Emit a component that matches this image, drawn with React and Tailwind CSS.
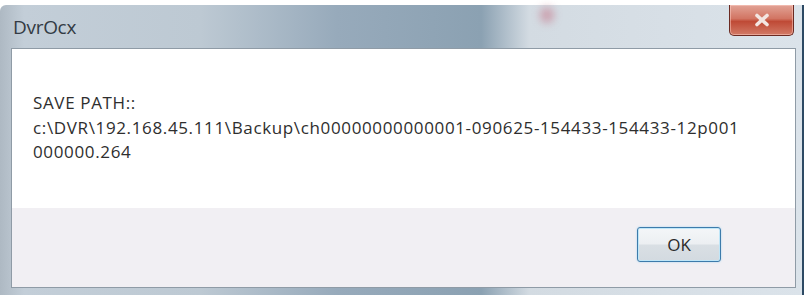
import React from 'react';

const font = { fontFamily: '"Open Sans", "Noto Sans", sans-serif' };

const CloseButton = () => (
  <div className="absolute right-[8px] top-0 w-[65px] h-[31px] rounded-b-[5px] border border-[#6b2a22] border-t-0 bg-[linear-gradient(180deg,#e2a396_0%,#d27563_45%,#bf4a36_55%,#d27a66_100%)] flex items-center justify-center shadow-[inset_0_0_0_1px_rgba(255,210,200,0.5)]">
    <svg width="18" height="14" viewBox="0 0 18 14">
      <path d="M4 2.5 L14 11.5 M14 2.5 L4 11.5" stroke="#f3e6e2" strokeWidth="3.6" strokeLinecap="round" />
    </svg>
  </div>
);

const App = () => {
  const lines = [
    'SAVE PATH::',
    'c:\\DVR\\192.168.45.111\\Backup\\ch00000000000001-090625-154433-154433-12p001',
    '000000.264',
  ];

  return (
    <div className="w-[809px] h-[295px] bg-white overflow-hidden" style={font}>
      <div className="h-[5px] bg-white" />
      {/* window frame */}
      <div className="relative w-[804px] h-[290px] rounded-tl-[6px] border-r-[2px] border-[#2d4a64] bg-[linear-gradient(90deg,#aeb9c3_0%,#c3ced8_3%,#bdc9d3_25%,#97aabb_42%,#8ba1b2_60%,#d3dbe2_66%,#dbe3ea_100%)] flex flex-col">
        <div className="h-[43px] flex items-center pl-[13px] pt-[1px] shrink-0">
          <span className="text-[19px] text-[#333b44] tracking-[-0.3px]">DvrOcx</span>
        </div>
        <div className="absolute left-[540px] top-[2px] w-[14px] h-[16px] rounded-full bg-[#c8899a] blur-[4px] opacity-70" />
        <CloseButton />
        {/* client area */}
        <div className="ml-[11px] mr-[6px] h-[240px] border border-[#8f9ba6] flex flex-col">
          <div className="h-[159px] bg-white pl-[21px] pt-[42px] text-[17px] leading-[24.5px] text-[#2e2e2e] tracking-[0.64px]">
            {lines.map((l, i) => (
              <div key={i} className="whitespace-nowrap">{l}</div>
            ))}
          </div>
          <div className="flex-1 bg-[#f1eff3] flex justify-end items-start pt-[19px] pr-[74px]">
            <button className="w-[84px] h-[35px] rounded-[3px] border border-[#3d7bab] bg-[linear-gradient(180deg,#f4f6f8_0%,#eceff2_48%,#d9dfe4_52%,#d3dae0_100%)] shadow-[inset_0_0_0_1px_#bfe6f8,0_0_2px_#9fd2ee] text-[17px] text-[#2a2a2a] flex items-center justify-center">
              OK
            </button>
          </div>
        </div>
      </div>
    </div>
  );
};

export default App;
